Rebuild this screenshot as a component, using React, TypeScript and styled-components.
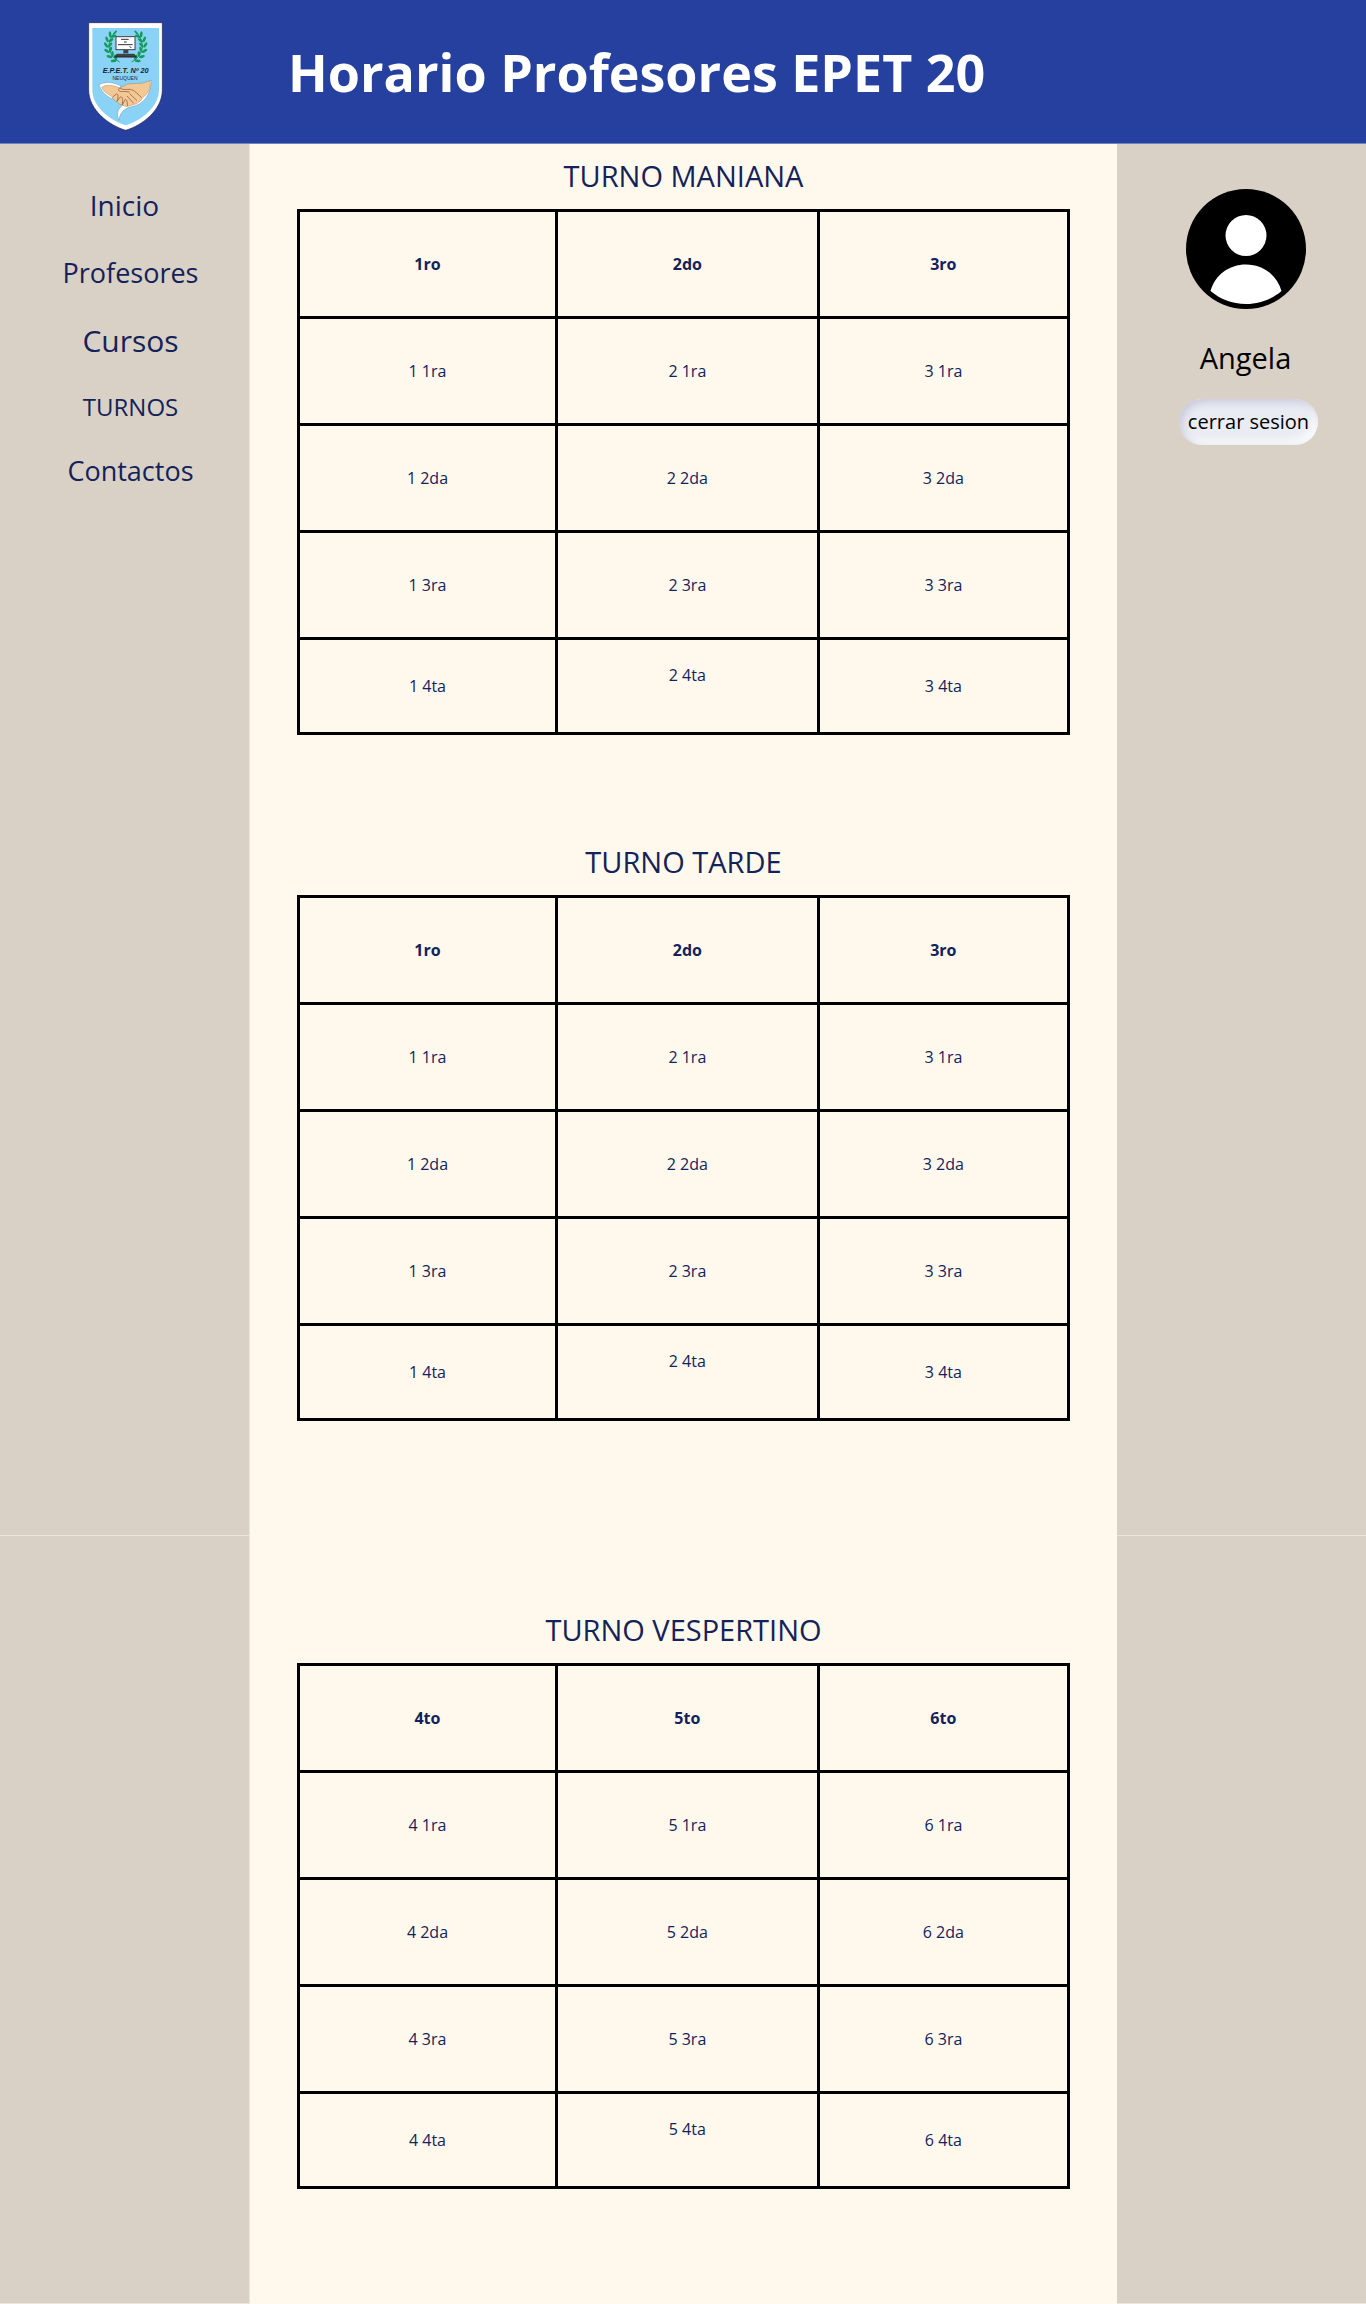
import React from "react";
import styled, { createGlobalStyle } from "styled-components";

const GlobalStyle = createGlobalStyle`
  *, *::before, *::after { box-sizing: border-box; }
  body {
    margin: 0;
    background: #fff9ed;
    color: #14225a;
    font-family: "Open Sans", "Noto Sans", sans-serif;
  }
`;

const COLUMNS = "250px minmax(0, 1fr) 249px";

const Header = styled.header`
  display: grid;
  grid-template-columns: 250px minmax(0, 1fr);
  align-items: center;
  height: 144px;
  background: #2640a0;
  border-bottom: 1px solid #7183c1;
`;

const LogoLink = styled.a`
  display: flex;
  justify-content: center;
  padding-top: 10px;
`;

const Title = styled.h1`
  margin: 0;
  padding-left: 38px;
  color: #ffffff;
  font-size: 52px;
  font-weight: 700;
  line-height: 72px;
`;

const Band = styled.div`
  display: grid;
  grid-template-columns: ${COLUMNS};
`;

const Side = styled.div<{ $edge?: "left" | "right" }>`
  background: #d9d1c5;
  border: 0 solid #ece5d9;
  border-bottom-width: 1px;
  border-right-width: ${(p) => (p.$edge === "right" ? 1 : 0)}px;
`;

const Nav = styled.nav`
  display: flex;
  flex-direction: column;
  align-items: center;
  gap: 30px;
  padding-top: 42px;
`;

const NavList = styled.ul`
  display: flex;
  flex-direction: column;
  align-items: center;
  gap: 30px;
  margin: 0;
  padding: 0 0 0 12px;
  list-style: none;
`;

const NavLink = styled.a<{ $size: number; $line: number }>`
  display: block;
  color: #14225a;
  font-size: ${(p) => p.$size}px;
  line-height: ${(p) => p.$line}px;
  text-decoration: none;
`;

const Profile = styled.section`
  display: flex;
  flex-direction: column;
  align-items: center;
  padding: 45px 0 0 8px;
  color: #000000;
`;

const UserName = styled.p`
  margin: 28px 0 20px;
  font-size: 29px;
  line-height: 42px;
`;

const LogoutButton = styled.button`
  height: 46px;
  margin-left: 6px;
  padding: 0 9px;
  border: 0;
  border-radius: 23px;
  background: #e9ecf2;
  box-shadow: inset 3px 3px 8px #c6c7da, inset -4px -4px 8px #ffffff;
  color: #000000;
  font-family: inherit;
  font-size: 20px;
  line-height: 28px;
  white-space: nowrap;
`;

const Content = styled.div<{ $second?: boolean }>`
  display: flex;
  flex-direction: column;
  gap: 95px;
  padding: ${(p) => (p.$second ? 62 : 0)}px 47px 115px;
`;

const Schedule = styled.table`
  width: 100%;
  border-collapse: collapse;
  table-layout: fixed;
`;

const Caption = styled.caption`
  height: 65px;
  padding-top: 12px;
  font-size: 29px;
  line-height: 40px;
`;

const Col = styled.col<{ $share: string }>`
  width: ${(p) => p.$share};
`;

const Row = styled.tr<{ $short?: boolean }>`
  height: ${(p) => (p.$short ? 95 : 107)}px;
`;

const HeadCell = styled.th`
  padding: 0;
  border: 3px solid #000000;
  font-size: 16px;
  font-weight: 700;
  line-height: 22px;
  text-align: center;
`;

const Cell = styled.td<{ $raised?: boolean }>`
  padding: 0 0 ${(p) => (p.$raised ? 22 : 0)}px;
  border: 3px solid #000000;
  font-size: 16px;
  line-height: 22px;
  text-align: center;
`;

const leaves = [
  [120, 78, -30], [112, 92, -15], [110, 108, 0], [113, 124, 20], [121, 139, 40], [133, 150, 60],
];

function SchoolLogo() {
  return (
    <svg width="75" height="109" viewBox="51 36 225 327" role="img" aria-label="E.P.E.T. Nº 20 Neuquén">
      <path d="M53 38H274V240C274 300 214 346 164 361C114 346 53 300 53 240Z" fill="#fff" stroke="#20254a" strokeWidth="2" />
      <path d="M64 54H264V240C264 290 210 332 164 346C118 332 64 290 64 240Z" fill="#8bd3f6" />
      {[0, 1].map((side) => (
        <g key={side} fill="#159a5b" transform={side ? "translate(328 0) scale(-1 1)" : undefined}>
          <path d="M133 66C108 90 104 132 146 156" fill="none" stroke="#159a5b" strokeWidth="3" />
          {leaves.map(([x, y, r]) => (
            <g key={y} transform={`translate(${x} ${y}) rotate(${-r})`}>
              <ellipse cx="-5" cy="-3" rx="4" ry="9" transform="rotate(-35 -5 -3)" />
              <ellipse cx="7" cy="-3" rx="4" ry="9" transform="rotate(40 7 -3)" />
            </g>
          ))}
          <ellipse cx="132" cy="68" rx="3" ry="8" transform="rotate(45 132 68)" />
        </g>
      ))}
      <rect x="135" y="80" width="57" height="39" fill="#fff" stroke="#3b3f46" strokeWidth="3" />
      <path d="M150 88H173M159 96H167M141 104H185M176 109L181 114" stroke="#333" strokeWidth="3" fill="none" />
      <path d="M157 120H172V130H157ZM137 131H190L197 141H130Z" fill="#3e434a" />
      <path d="M130 141H197" stroke="#222" strokeWidth="3" />
      <text x="164" y="189" textAnchor="middle" fontFamily="'Liberation Sans Narrow', 'Liberation Sans', sans-serif" fontSize="22" fontWeight="700" fontStyle="italic" fill="#1c2230">E.P.E.T. Nº 20</text>
      <text x="162" y="209" textAnchor="middle" fontFamily="'Liberation Sans Narrow', 'Liberation Sans', sans-serif" fontSize="15" fontWeight="400" fill="#1c2230">NEUQUEN</text>
      <path d="M84 224C104 214 126 216 150 228L124 266C104 258 90 242 84 224ZM241 210C240 250 222 284 178 291C156 296 146 312 144 331C132 304 146 286 172 278Z" fill="#fff" stroke="#596d7d" strokeWidth="1" />
      <path d="M92 232C106 222 128 225 146 234L170 222C190 219 206 222 220 218L237 212C240 236 232 250 216 262C208 276 194 284 180 286C170 291 160 290 154 284C146 284 140 280 138 274C130 273 126 268 125 261C112 254 98 246 92 232Z" fill="#f3c894" stroke="#8c6340" strokeWidth="1" />
      <path d="M146 234C158 242 172 236 182 239C194 244 202 254 212 263M146 234C138 241 146 247 158 244L176 246M125 261L136 252C143 252 142 260 138 274M138 274L149 260C156 262 155 270 154 284M154 284L163 268C170 270 168 280 170 288M176 251L198 272M168 258L188 280" fill="none" stroke="#7b5332" strokeWidth="2" />
    </svg>
  );
}

function Avatar() {
  return (
    <svg width="120" height="120" viewBox="0 0 120 120" role="img" aria-label="Angela">
      <circle cx="60" cy="60" r="60" fill="#000" />
      <circle cx="60" cy="46.5" r="20.5" fill="#fff" />
      <path d="M24.5 102C29 86 43 75.500 60 75.500S91 86 95.500 102C86 110 74 115 60 115S34 110 24.500 102Z" fill="#fff" />
    </svg>
  );
}

function Turn({ name, grades }: { name: string; grades: number[] }) {
  const ordinal = (n: number) => (n === 2 ? "do" : n === 1 || n === 3 ? "ro" : "to");
  const divisions = ["1ra", "2da", "3ra", "4ta"];
  return (
    <Schedule>
      <Caption>{name}</Caption>
      <colgroup>
        <Col $share="33.5%" />
        <Col $share="34%" />
        <Col $share="32.5%" />
      </colgroup>
      <thead>
        <Row>
          {grades.map((g) => (
            <HeadCell key={g} scope="col">{`${g}${ordinal(g)}`}</HeadCell>
          ))}
        </Row>
      </thead>
      <tbody>
        {divisions.map((d) => (
          <Row key={d} $short={d === "4ta"}>
            {grades.map((g, i) => (
              <Cell key={g} $raised={d === "4ta" && i === 1}>{`${g} ${d}`}</Cell>
            ))}
          </Row>
        ))}
      </tbody>
    </Schedule>
  );
}

export default function App() {
  return (
    <>
      <GlobalStyle />
      <Header>
        <LogoLink href="#"><SchoolLogo /></LogoLink>
        <Title>Horario Profesores EPET 20</Title>
      </Header>
      <main>
        <Band>
          <Side $edge="right">
            <Nav aria-label="Principal">
              <NavLink href="#inicio" $size={28} $line={38}>Inicio</NavLink>
              <NavList>
                <li><NavLink href="#profesores" $size={27} $line={38}>Profesores</NavLink></li>
                <li><NavLink href="#cursos" $size={30} $line={38}>Cursos</NavLink></li>
                <li><NavLink href="#turnos" $size={24} $line={34}>TURNOS</NavLink></li>
                <li><NavLink href="#contactos" $size={27} $line={34}>Contactos</NavLink></li>
              </NavList>
            </Nav>
          </Side>
          <Content>
            <Turn name="TURNO MANIANA" grades={[1, 2, 3]} />
            <Turn name="TURNO TARDE" grades={[1, 2, 3]} />
          </Content>
          <Side>
            <Profile>
              <Avatar />
              <UserName>Angela</UserName>
              <LogoutButton type="button">cerrar sesion</LogoutButton>
            </Profile>
          </Side>
        </Band>
        <Band>
          <Side $edge="right" />
          <Content $second>
            <Turn name="TURNO VESPERTINO" grades={[4, 5, 6]} />
          </Content>
          <Side />
        </Band>
      </main>
    </>
  );
}
